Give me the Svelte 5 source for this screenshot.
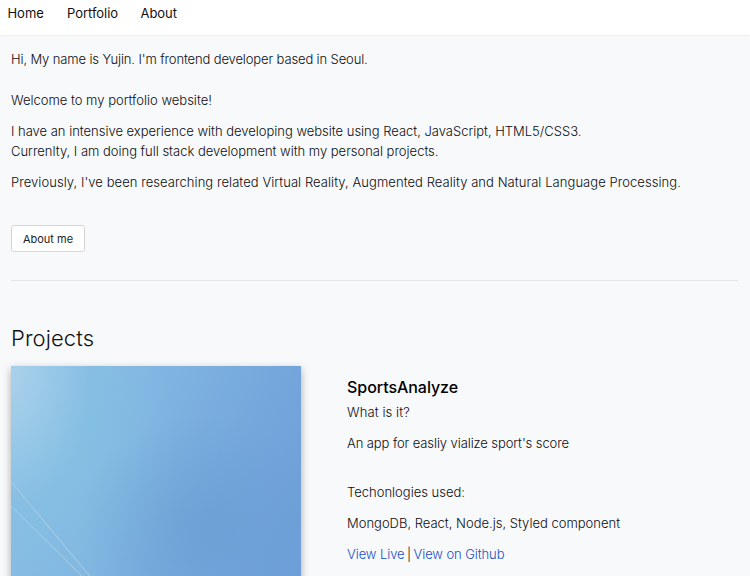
<script>
  const nav = [
    { label: 'Home', width: 59.5 },
    { label: 'Portfolio', width: 73.5 },
    { label: 'About', width: 60 }
  ];
</script>

<header>
  <nav>
    {#each nav as item}
      <a href="#top" style="width: {item.width}px">{item.label}</a>
    {/each}
  </nav>
</header>

<main>
  <section class="intro">
    <p class="hi">Hi, My name is Yujin. I'm frontend developer based in Seoul.</p>
    <p class="welcome">Welcome to my portfolio website!</p>
    <p class="experience">
      I have an intensive experience with developing website using React, JavaScript, HTML5/CSS3.<br />
      Currenlty, I am doing full stack development with my personal projects.
    </p>
    <p class="previous">Previously, I've been researching related Virtual Reality, Augmented Reality and Natural Language Processing.</p>
    <button>About me</button>
  </section>

  <section class="projects">
    <h2>Projects</h2>
    <div class="project">
      <div class="cover">
        <svg viewBox="0 0 290 290" width="290" height="290" aria-hidden="true">
          <path d="M0 115.5 L79.5 211 M0 140 L72 211" fill="none" stroke="#b5cfe0" stroke-width="0.9" />
        </svg>
      </div>
      <div class="details">
        <h3>SportsAnalyze</h3>
        <p class="what">What is it?</p>
        <p class="summary">An app for easliy vialize sport's score</p>
        <p class="used">Techonlogies used:</p>
        <p class="stack">MongoDB, React, Node.js, Styled component</p>
        <p class="links"><a href="#live">View Live</a><i>|</i><a href="#github">View on Github</a></p>
      </div>
    </div>
  </section>
</main>

<style>
  :global(body) {
    margin: 0;
    overflow: hidden;
    background: #f8f9fb;
  }
  header, main {
    font: 300 13px/20px Inter, "Liberation Sans", sans-serif;
    color: #0c0d10;
  }
  header {
    box-sizing: border-box;
    height: 35px;
    padding: 3px 0 0 7.5px;
    background: #fff;
    box-shadow: 0 0 2px rgba(0, 0, 0, 0.12);
  }
  nav {
    display: flex;
  }
  nav a {
    color: #111;
    text-decoration: none;
    font-weight: 400;
    letter-spacing: -0.04px;
  }
  main {
    height: 541px;
    overflow: hidden;
    padding: 0 12px 0 11px;
    box-sizing: border-box;
  }
  p, h2, h3 {
    margin: 0;
    white-space: nowrap;
  }
  .intro {
    padding: 14px 0 28px;
    border-bottom: 1px solid #e3e5e8;
  }
  .hi {
    margin-bottom: 21px;
    letter-spacing: -0.125px;
  }
  .welcome, .experience {
    margin-bottom: 11px;
  }
  .experience {
    letter-spacing: -0.012px;
  }
  .previous {
    letter-spacing: 0.06px;
  }
  button {
    display: block;
    box-sizing: border-box;
    width: 74px;
    height: 27px;
    margin-top: 33px;
    padding: 0;
    border: 1px solid #d6d6d8;
    border-radius: 3px;
    background: #fff;
    color: #222326;
    font: 400 11px/20px Inter, sans-serif;
  }
  h2 {
    margin: 42px 0 12px;
    font-size: 22px;
    font-weight: 300;
    line-height: 31px;
    letter-spacing: 0.1px;
    color: #111;
  }
  .project {
    display: flex;
    gap: 46px;
  }
  .cover {
    width: 290px;
    height: 290px;
    background:
      radial-gradient(ellipse 80px 130px at 0 10px, rgba(172, 210, 236, 0.9), rgba(165, 207, 234, 0)),
      radial-gradient(ellipse 130px 110px at 195px 160px, rgba(103, 157, 209, 0.6), rgba(103, 157, 209, 0)),
      radial-gradient(ellipse 110px 170px at 55px 85px, rgba(132, 192, 226, 0.8), rgba(132, 192, 226, 0)),
      linear-gradient(112deg, #8ec4e6 0%, #80b5e1 38%, #75a7dc 65%, #6b9bd8 100%);
    box-shadow: 0 3px 8px rgba(0, 0, 0, 0.32);
  }
  .cover svg {
    display: block;
  }
  .details {
    padding-top: 11px;
  }
  h3 {
    margin-bottom: 5px;
    font-size: 16px;
    font-weight: 500;
    line-height: 20px;
    letter-spacing: -0.05px;
    color: #000;
  }
  .what, .used, .stack {
    margin-bottom: 11px;
  }
  .what {
    letter-spacing: 0.1px;
  }
  .summary {
    margin-bottom: 29px;
    letter-spacing: -0.09px;
  }
  .links {
    letter-spacing: -0.08px;
  }
  .links a {
    color: #1b50c4;
    text-decoration: none;
  }
  .links i {
    margin: 0 2.5px;
    font-style: normal;
  }
</style>
